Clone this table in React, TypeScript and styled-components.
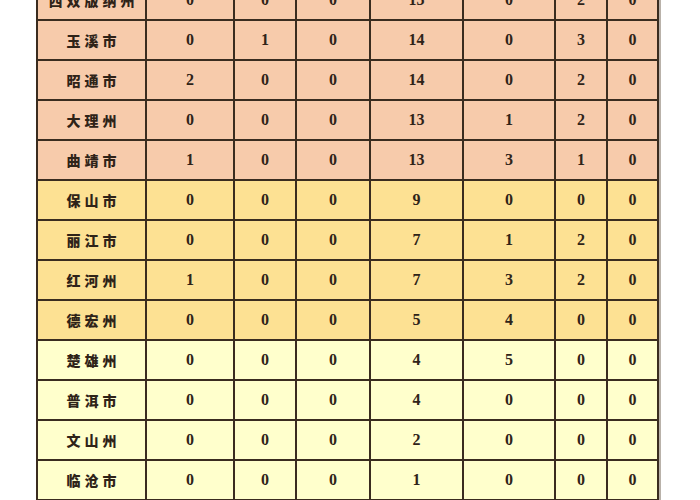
import styled, { createGlobalStyle } from "styled-components";

const GlobalStyle = createGlobalStyle`
  html, body {
    margin: 0;
    padding: 0;
    background: #ffffff;
  }
  body {
    font-family: "Liberation Serif", "Noto Sans CJK SC", serif;
  }
`;

const Page = styled.div`
  padding-left: 36px;
  margin-top: -21px;
`;

const Table = styled.table`
  border-collapse: collapse;
  table-layout: fixed;
  width: 622px;
  box-shadow: 2px 0 0 #b9b2aa;
`;

type Tone = "peach" | "amber" | "cream";

const toneColors: Record<Tone, string> = {
  peach: "#f7cbab",
  amber: "#fde193",
  cream: "#ffffcc",
};

const Row = styled.tr<{ $tone: Tone }>`
  height: 40px;
  background: ${(p) => toneColors[p.$tone]};
`;

const Cell = styled.td`
  border: 2px solid #3a2c1f;
  text-align: center;
  vertical-align: middle;
  padding: 0;
  font-family: "Liberation Serif", serif;
  font-weight: 700;
  font-size: 16px;
  color: #2f2318;
`;

const NameCell = styled(Cell)`
  font-family: "Noto Sans CJK SC", sans-serif;
  font-weight: 900;
  font-size: 14px;
  letter-spacing: 4px;
  text-indent: 4px;
`;

const widths = [109, 88, 62, 74, 93, 92, 52, 51];

const rows: { name: string; tone: Tone; values: number[] }[] = [
  { name: "西双版纳州", tone: "peach", values: [0, 0, 0, 13, 0, 2, 0] },
  { name: "玉溪市", tone: "peach", values: [0, 1, 0, 14, 0, 3, 0] },
  { name: "昭通市", tone: "peach", values: [2, 0, 0, 14, 0, 2, 0] },
  { name: "大理州", tone: "peach", values: [0, 0, 0, 13, 1, 2, 0] },
  { name: "曲靖市", tone: "peach", values: [1, 0, 0, 13, 3, 1, 0] },
  { name: "保山市", tone: "amber", values: [0, 0, 0, 9, 0, 0, 0] },
  { name: "丽江市", tone: "amber", values: [0, 0, 0, 7, 1, 2, 0] },
  { name: "红河州", tone: "amber", values: [1, 0, 0, 7, 3, 2, 0] },
  { name: "德宏州", tone: "amber", values: [0, 0, 0, 5, 4, 0, 0] },
  { name: "楚雄州", tone: "cream", values: [0, 0, 0, 4, 5, 0, 0] },
  { name: "普洱市", tone: "cream", values: [0, 0, 0, 4, 0, 0, 0] },
  { name: "文山州", tone: "cream", values: [0, 0, 0, 2, 0, 0, 0] },
  { name: "临沧市", tone: "cream", values: [0, 0, 0, 1, 0, 0, 0] },
];

const App = () => {
  return (
    <>
      <GlobalStyle />
      <Page>
        <Table>
          <colgroup>
            {widths.map((w, i) => (
              <col key={i} style={{ width: `${w}px` }} />
            ))}
          </colgroup>
          <tbody>
            {rows.map((r) => (
              <Row key={r.name} $tone={r.tone}>
                <NameCell>{r.name}</NameCell>
                {r.values.map((v, i) => (
                  <Cell key={i}>{v}</Cell>
                ))}
              </Row>
            ))}
          </tbody>
        </Table>
      </Page>
    </>
  );
};

export default App;
